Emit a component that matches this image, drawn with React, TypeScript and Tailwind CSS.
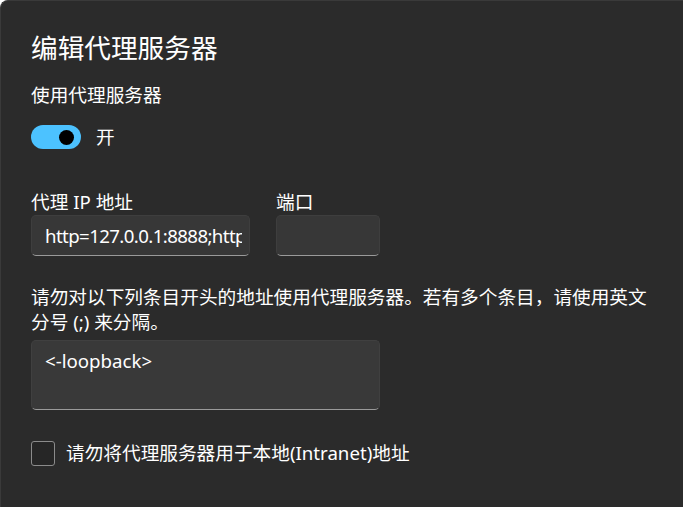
export default function App() {
  return (
    <div
      className="w-[683px] h-[507px] overflow-hidden bg-[#2b2b2b] rounded-tl-[8px] border-l border-t border-[#3a3a3a] text-white"
      style={{ fontFamily: '"Noto Sans", "Noto Sans CJK SC", sans-serif' }}
    >
      <div className="pl-[30px] pr-[31px] pt-[29px] flex flex-col">
        {/* Title */}
        <h1 className="text-[26.67px] leading-[36px] font-normal">编辑代理服务器</h1>

        {/* Use proxy toggle */}
        <div className="mt-[16px] text-[18.67px] leading-[26px]">使用代理服务器</div>
        <div className="mt-[16px] flex items-center gap-[15px]">
          <div className="w-[50px] h-[24px] rounded-full bg-[#4cc2ff] flex items-center justify-end pr-[7px]">
            <span className="w-[15px] h-[15px] rounded-full bg-black" />
          </div>
          <span className="text-[18.67px] leading-[26px]">开</span>
        </div>

        {/* Address + port */}
        <div className="mt-[39px] flex gap-[26px]">
          <div className="flex flex-col">
            <label className="text-[18.67px] leading-[26px]">代理 IP 地址</label>
            <input
              readOnly
              value="http=127.0.0.1:8888;https=127.0.0.1:8888"
              className="w-[219px] h-[41px] rounded-[5px] bg-[#373737] border border-[#3e3e3e] border-b-[#9a9a9a] pl-[13px] pr-[7px] text-[18.67px] tracking-[-0.6px] text-white outline-none"
              style={{ fontFamily: '"Noto Sans", "Noto Sans CJK SC", sans-serif' }}
            />
          </div>
          <div className="flex flex-col">
            <label className="text-[18.67px] leading-[26px]">端口</label>
            <input
              readOnly
              value=""
              className="w-[104px] h-[41px] rounded-[5px] bg-[#373737] border border-[#3e3e3e] border-b-[#9a9a9a] px-[13px] text-[18.67px] text-white outline-none"
            />
          </div>
        </div>

        {/* Exceptions */}
        <p className="mt-[28px] text-[18.67px] leading-[25px] w-[620px]">
          请勿对以下列条目开头的地址使用代理服务器。若有多个条目，请使用英文分号 (;) 来分隔。
        </p>
        <textarea
          readOnly
          value="<-loopback>"
          className="mt-[6px] w-[349px] h-[70px] resize-none rounded-[5px] bg-[#393939] border border-[#404040] border-b-[#9a9a9a] pl-[13px] pr-[8px] pt-[7px] text-[18.67px] leading-[26px] text-white outline-none"
          style={{ fontFamily: '"Noto Sans", "Noto Sans CJK SC", sans-serif' }}
        />

        {/* Local bypass */}
        <div className="mt-[30px] flex items-center gap-[11px]">
          <span className="w-[24px] h-[25px] rounded-[3px] border border-[#8b8b8b] bg-[#262626]" />
          <span className="text-[18.67px] leading-[26px]">请勿将代理服务器用于本地(Intranet)地址</span>
        </div>
      </div>
    </div>
  );
}
